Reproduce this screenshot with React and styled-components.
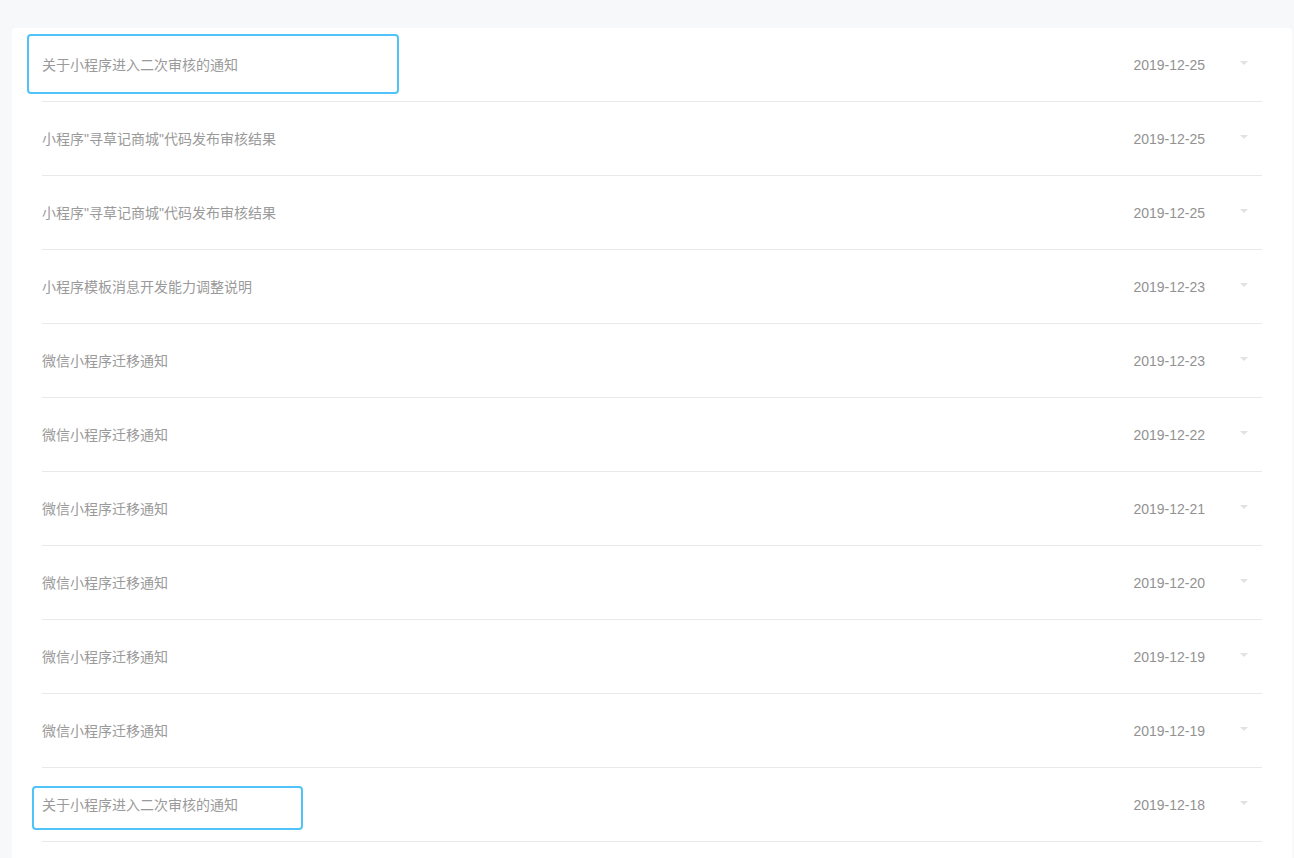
import styled, { createGlobalStyle } from 'styled-components';

const GlobalStyle = createGlobalStyle`
  html, body {
    margin: 0;
    padding: 0;
    background: #f7f8fa;
    font-family: "Liberation Sans", "Noto Sans CJK SC", Arial, sans-serif;
  }
`;

const Page = styled.div`
  padding: 28px 2px 0 12px;
  height: 858px;
  box-sizing: border-box;
  overflow: hidden;
`;

const Card = styled.div`
  position: relative;
  background: #fff;
  border-radius: 4px 4px 0 0;
  padding: 0 30px;
  min-height: 830px;
`;

const List = styled.ul`
  margin: 0;
  padding: 0;
  list-style: none;
`;

const Row = styled.li`
  display: flex;
  align-items: center;
  height: 73px;
  border-bottom: 1px solid #e9e9e9;
  font-size: 14px;
  color: #9a9a9a;
`;

const Title = styled.span`
  flex: 1;
  margin-top: -2px;
`;

const Date = styled.span`
  color: #929292;
  font-family: "Liberation Sans", Arial, sans-serif;
  margin-right: 35px;
  margin-top: 1px;
`;

const Caret = styled.span`
  width: 0;
  height: 0;
  border-left: 4.5px solid transparent;
  border-right: 4.5px solid transparent;
  border-top: 4px solid #e2e2e2;
  margin-right: 14px;
  margin-top: -4px;
`;

const Mark = styled.div`
  position: absolute;
  left: ${(p) => p.$left}px;
  top: ${(p) => p.$top}px;
  width: ${(p) => p.$width}px;
  height: ${(p) => p.$height}px;
  border: 2.5px solid #4fc3f7;
  border-radius: 4px;
  box-sizing: border-box;
  pointer-events: none;
`;

const notices = [
  ['关于小程序进入二次审核的通知', '2019-12-25'],
  ['小程序"寻草记商城"代码发布审核结果', '2019-12-25'],
  ['小程序"寻草记商城"代码发布审核结果', '2019-12-25'],
  ['小程序模板消息开发能力调整说明', '2019-12-23'],
  ['微信小程序迁移通知', '2019-12-23'],
  ['微信小程序迁移通知', '2019-12-22'],
  ['微信小程序迁移通知', '2019-12-21'],
  ['微信小程序迁移通知', '2019-12-20'],
  ['微信小程序迁移通知', '2019-12-19'],
  ['微信小程序迁移通知', '2019-12-19'],
  ['关于小程序进入二次审核的通知', '2019-12-18'],
];

function App() {
  return (
    <>
      <GlobalStyle />
      <Page>
        <Card>
          <List>
            {notices.map(([title, date], i) => (
              <Row key={i}>
                <Title>{title}</Title>
                <Date>{date}</Date>
                <Caret />
              </Row>
            ))}
          </List>
          <Mark $left={15} $top={6} $width={372} $height={60} />
          <Mark $left={20} $top={758} $width={271} $height={44} />
        </Card>
      </Page>
    </>
  );
}

export default App;
